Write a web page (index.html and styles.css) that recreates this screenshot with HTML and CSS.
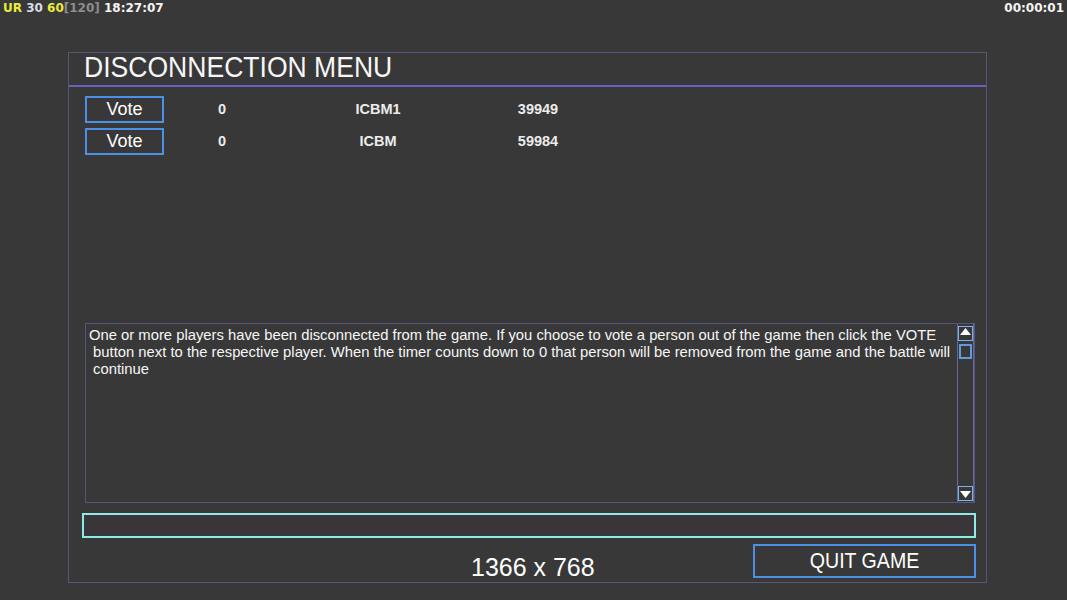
FILE: index.html
```html
<!DOCTYPE html>
<html>
<head>
<meta charset="utf-8">
<link rel="stylesheet" href="styles.css">
</head>
<body>
<div class="status">
  <div class="status-left"><span class="yel">UR</span> <span class="wht">30</span> <span class="yel">60</span><span class="gry">[120]</span> <span class="time">18:27:07</span></div>
  <div class="status-right">00:00:01</div>
</div>
<div class="panel">
  <div class="header"><span class="title">DISCONNECTION MENU</span></div>
  <div class="players">
    <div class="row">
      <div class="vote"><span>Vote</span></div>
      <div class="c1">0</div>
      <div class="c2">ICBM1</div>
      <div class="c3">39949</div>
    </div>
    <div class="row">
      <div class="vote"><span>Vote</span></div>
      <div class="c1">0</div>
      <div class="c2">ICBM</div>
      <div class="c3">59984</div>
    </div>
  </div>
  <div class="msgbox">
    <div class="msg">One or more players have been disconnected from the game. If you choose to vote a person out of the game then click the VOTE<br>&nbsp;button next to the respective player. When the timer counts down to 0 that person will be removed from the game and the battle will<br>&nbsp;continue</div>
    <div class="scroll">
      <div class="sbtn"><svg width="11" height="7" viewBox="0 0 11 7"><polygon points="5.5,0 11,7 0,7" fill="#ffffff"/></svg></div>
      <div class="thumb"></div>
      <div class="track"></div>
      <div class="sbtn down"><svg width="11" height="7" viewBox="0 0 11 7"><polygon points="0,0 11,0 5.5,7" fill="#ffffff"/></svg></div>
    </div>
  </div>
  <div class="input"></div>
  <div class="bottom">
    <div class="res"><span>1366 x 768</span></div>
    <div class="quit"><span>QUIT GAME</span></div>
  </div>
</div>
</body>
</html>
```
FILE: styles.css
```css
html, body {
  margin: 0;
  padding: 0;
  background: #383838;
  width: 1067px;
  height: 600px;
  overflow: hidden;
  font-family: "Liberation Sans", Arial, sans-serif;
  color: #ffffff;
}
.status {
  display: flex;
  justify-content: space-between;
  height: 16px;
  padding: 0 3px 0 3px;
  font-family: "DejaVu Sans", Verdana, sans-serif;
  font-weight: bold;
  font-size: 12px;
  line-height: 16px;
}
.yel { color: #ecec3a; }
.wht { color: #d8dde4; }
.gry { color: #8e8e8e; }
.time { color: #f4f4f4; }
.status-right { color: #f4f4f4; }

.panel {
  margin: 36px 0 0 68px;
  width: 917px;
  border: 1px solid #56557c;
  display: flex;
  flex-direction: column;
}
.header {
  height: 32px;
  line-height: 27px;
  border-bottom: 2px solid #6761c6;
  padding-left: 15px;
}
.title {
  display: inline-block;
  font-size: 30px;
  transform: scaleX(0.885);
  transform-origin: left center;
  white-space: nowrap;
  color: #f6f6f6;
}
.players {
  padding: 9px 0 0 16px;
  display: flex;
  flex-direction: column;
  gap: 5px;
  height: 227px;
}
.row {
  display: flex;
  align-items: center;
  height: 27px;
}
.vote {
  box-sizing: border-box;
  width: 79px;
  height: 27px;
  border: 2px solid #4b8fe6;
  text-align: center;
  font-size: 18px;
  line-height: 22px;
}
.c1, .c2, .c3 {
  font-size: 14.5px;
  font-weight: bold;
  text-align: center;
  color: #ececec;
  padding-bottom: 2px;
}
.c1 { width: 116px; }
.c2 { width: 196px; }
.c3 { width: 124px; }

.msgbox {
  margin-left: 16px;
  width: 888px;
  height: 178px;
  border: 1px solid #56557c;
  display: flex;
}
.msg {
  flex: 1;
  padding: 3px 0 0 3px;
  font-size: 14.8px;
  line-height: 17px;
  white-space: nowrap;
  color: #f6f6f6;
}
.scroll {
  width: 15px;
  border-left: 1px solid #6a68a0;
  border-right: 1px solid #6a68a0;
  display: flex;
  flex-direction: column;
  padding-top: 2px;
  padding-bottom: 1px;
}
.sbtn {
  box-sizing: border-box;
  width: 15px;
  height: 15px;
  border: 1px solid #7cb2ea;
  display: flex;
  justify-content: center;
  padding-top: 1px;
}
.sbtn.down {
  padding-top: 4px;
}
.thumb {
  box-sizing: border-box;
  margin: 3px 0 0 1px;
  width: 13px;
  height: 15px;
  border: 2px solid #5f9ae0;
}
.track { flex: 1; }

.input {
  box-sizing: border-box;
  margin: 10px 0 0 13px;
  width: 894px;
  height: 25px;
  border: 2px solid #8fe9e6;
  background: #3a3538;
}
.bottom {
  display: flex;
  align-items: flex-start;
  height: 34px;
  margin-top: 6px;
  padding-bottom: 4px;
}
.res {
  margin-left: 402px;
  margin-top: 10px;
  width: 124px;
  height: 27px;
  font-size: 26px;
  line-height: 27px;
  white-space: nowrap;
}
.res span {
  display: inline-block;
  transform: scaleX(0.96);
  transform-origin: left center;
}
.quit {
  box-sizing: border-box;
  margin-left: auto;
  margin-right: 10px;
  width: 223px;
  height: 34px;
  border: 2px solid #4b8fe6;
  text-align: center;
  font-size: 22px;
  line-height: 30px;
  white-space: nowrap;
}
.quit span {
  display: inline-block;
  transform: scaleX(0.89);
}
```
